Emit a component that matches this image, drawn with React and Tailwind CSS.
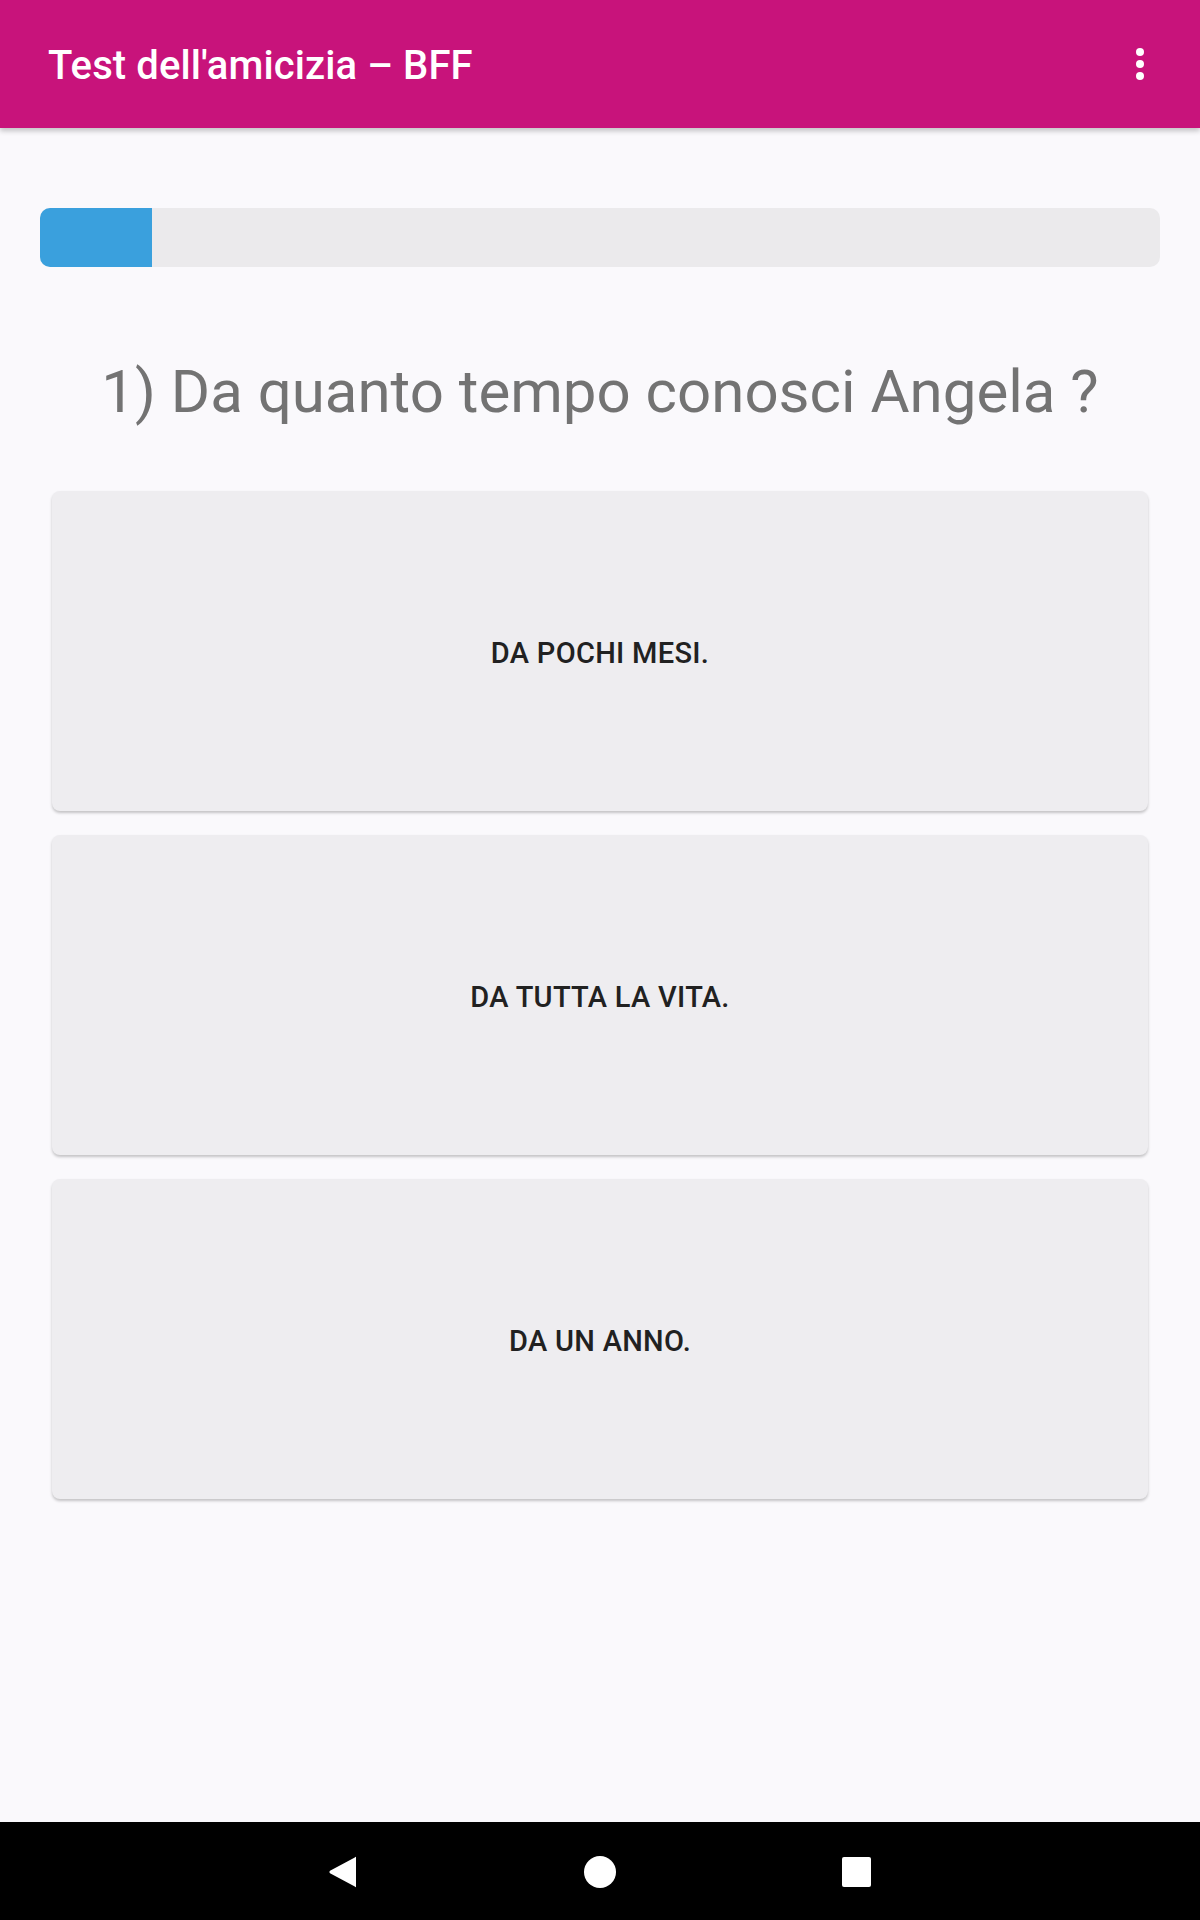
import React from "react";

const answers = ["DA POCHI MESI.", "DA TUTTA LA VITA.", "DA UN ANNO."];

export default function App() {
  return (
    <div
      className="w-[1200px] h-[1920px] flex flex-col bg-[#faf9fc] overflow-hidden"
      style={{ fontFamily: "Roboto, 'Noto Sans', sans-serif" }}
    >
      <header className="relative z-10 h-[128px] shrink-0 bg-[#c8137b] flex items-center justify-between pl-[48px] pr-[48px] pt-[4px] shadow-[0_3px_5px_rgba(0,0,0,0.22)]">
        <h1 className="text-white text-[40px] font-medium leading-none tracking-[0.1px]">
          Test dell'amicizia – BFF
        </h1>
        <div className="flex flex-col items-center gap-[4px] w-[8px] mr-[8px] -mt-[4px]">
          <span className="block w-[8px] h-[8px] rounded-full bg-white" />
          <span className="block w-[8px] h-[8px] rounded-full bg-white" />
          <span className="block w-[8px] h-[8px] rounded-full bg-white" />
        </div>
      </header>

      <main className="flex-1 flex flex-col">
        <div className="mt-[80px] mx-[40px] h-[59px] rounded-[10px] bg-[#ebeaec] overflow-hidden flex">
          <div className="w-[112px] h-full bg-[#3aa0dd]" />
        </div>

        <h2 className="mt-[95px] text-center text-[60px] leading-none text-[#737373] font-normal">
          1) Da quanto tempo conosci Angela ?
        </h2>

        <div className="mt-[69px] mx-[52px] flex flex-col gap-[24px]">
          {answers.map((a) => (
            <button
              key={a}
              className="h-[320px] w-full rounded-[8px] bg-[#eeedf0] shadow-[0_2px_3px_rgba(0,0,0,0.22)] flex items-center justify-center"
            >
              <span className="text-[29px] font-medium leading-none text-[#212121] tracking-[0.3px] translate-y-[2px]">
                {a}
              </span>
            </button>
          ))}
        </div>
      </main>

      <nav className="h-[98px] shrink-0 bg-black flex items-center justify-center">
        <div className="relative w-full h-full">
          <svg
            className="absolute left-[328px] top-[34px]"
            width="30"
            height="32"
            viewBox="0 0 30 32"
          >
            <path
              d="M28 1.5 L28 30.5 Q28 32 26.8 30.6 L2 17.2 Q0.6 16 2 14.8 L26.8 1.4 Q28 0 28 1.5 Z"
              fill="white"
            />
          </svg>
          <div className="absolute left-[584px] top-[34px] w-[32px] h-[32px] rounded-full bg-white" />
          <div className="absolute left-[842px] top-[35px] w-[29px] h-[30px] rounded-[2px] bg-white" />
        </div>
      </nav>
    </div>
  );
}
